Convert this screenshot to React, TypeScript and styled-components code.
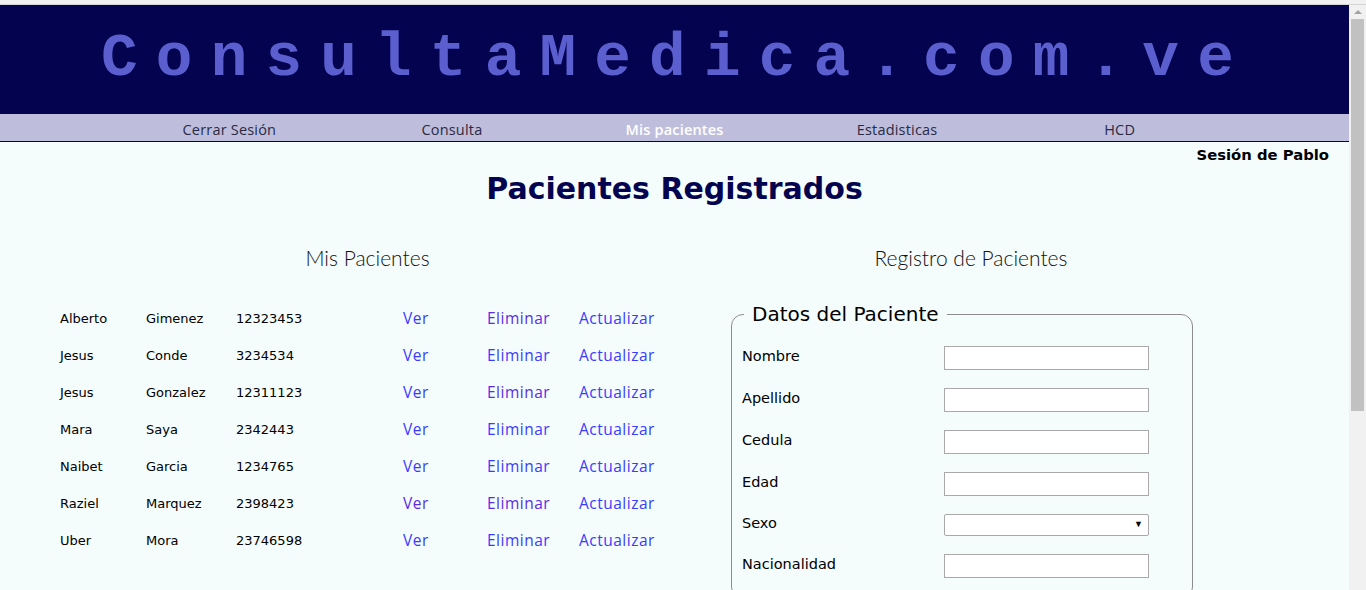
import React from "react";
import styled, { createGlobalStyle } from "styled-components";

const GlobalStyle = createGlobalStyle`
  html, body {
    margin: 0;
    padding: 0;
    overflow: hidden;
    background: #f1f1f1;
  }
`;

interface Patient {
  name: string;
  surname: string;
  cedula: string;
  seen?: "ver" | "eliminar" | "both";
}

const patients: Patient[] = [
  { name: "Alberto", surname: "Gimenez", cedula: "12323453", seen: "eliminar" },
  { name: "Jesus", surname: "Conde", cedula: "3234534" },
  { name: "Jesus", surname: "Gonzalez", cedula: "12311123", seen: "eliminar" },
  { name: "Mara", surname: "Saya", cedula: "2342443" },
  { name: "Naibet", surname: "Garcia", cedula: "1234765" },
  { name: "Raziel", surname: "Marquez", cedula: "2398423", seen: "both" },
  { name: "Uber", surname: "Mora", cedula: "23746598" },
];

const navItems = ["Cerrar Sesión", "Consulta", "Mis pacientes", "Estadisticas", "HCD"];

const fields = ["Nombre", "Apellido", "Cedula", "Edad", "Sexo", "Nacionalidad"];

export default function App() {
  return (
    <Frame>
      <GlobalStyle />
      <TopStrip />
      <Window>
        <Page>
          <Header>ConsultaMedica.com.ve</Header>
          <Nav>
            {navItems.map((item) => (
              <NavItem key={item} $active={item === "Mis pacientes"}>
                {item}
              </NavItem>
            ))}
          </Nav>
          <Content>
            <Session>Sesión de Pablo</Session>
            <Title>Pacientes Registrados</Title>
            <Columns>
              <Column>
                <SectionTitle>Mis Pacientes</SectionTitle>
                <PatientList>
                  {patients.map((p, i) => (
                    <PatientRow key={i}>
                      <Cell>{p.name}</Cell>
                      <Cell>{p.surname}</Cell>
                      <Cell>{p.cedula}</Cell>
                      <ActionLink $visited={p.seen === "ver" || p.seen === "both"}>Ver</ActionLink>
                      <ActionLink $visited={p.seen === "eliminar" || p.seen === "both"}>Eliminar</ActionLink>
                      <ActionLink>Actualizar</ActionLink>
                    </PatientRow>
                  ))}
                </PatientList>
              </Column>
              <Column>
                <SectionTitle>Registro de Pacientes</SectionTitle>
                <Fieldset>
                  <Legend>Datos del Paciente</Legend>
                  {fields.map((f) => (
                    <FormRow key={f}>
                      <Label>{f}</Label>
                      {f === "Sexo" ? (
                        <SelectBox>
                          <Select defaultValue="">
                            <option value=""></option>
                            <option value="M">Masculino</option>
                            <option value="F">Femenino</option>
                          </Select>
                        </SelectBox>
                      ) : (
                        <Input type="text" />
                      )}
                    </FormRow>
                  ))}
                </Fieldset>
              </Column>
            </Columns>
          </Content>
        </Page>
        <Scrollbar>
          <ScrollArrow />
          <ScrollThumb />
        </Scrollbar>
      </Window>
    </Frame>
  );
}

const Frame = styled.div`
  display: flex;
  flex-direction: column;
  height: 590px;
  width: 1366px;
`;

const TopStrip = styled.div`
  height: 4px;
  background: #f1f1f1;
  border-bottom: 1px solid #d4d4d4;
  flex-shrink: 0;
`;

const Window = styled.div`
  flex: 1;
  display: flex;
  min-height: 0;
`;

const Page = styled.div`
  flex: 1;
  display: flex;
  flex-direction: column;
  background: #f5fcfc;
  overflow: hidden;
`;

const Header = styled.div`
  height: 109px;
  background: #03034f;
  color: #5a5ecf;
  font-family: "Liberation Mono", "Courier New", monospace;
  font-weight: bold;
  font-size: 61px;
  letter-spacing: 18.2px;
  display: flex;
  align-items: center;
  justify-content: center;
  padding-left: 4px;
  padding-bottom: 2px;
  box-sizing: border-box;
  flex-shrink: 0;
`;

const Nav = styled.div`
  height: 27px;
  background: #bebedc;
  border-bottom: 1px solid #03034f;
  display: flex;
  justify-content: center;
  flex-shrink: 0;
`;

const NavItem = styled.div<{ $active?: boolean }>`
  width: 16.5%;
  text-align: center;
  line-height: 31px;
  font-family: "Open Sans", "Noto Sans", sans-serif;
  font-size: 14.5px;
  letter-spacing: 0.2px;
  color: ${(p) => (p.$active ? "#ffffff" : "#2a2a44")};
  font-weight: ${(p) => (p.$active ? 600 : 400)};
`;

const Content = styled.div`
  display: flex;
  flex-direction: column;
`;

const Session = styled.div`
  align-self: flex-end;
  padding: 4px 20px 0 0;
  font-family: "DejaVu Sans", Verdana, sans-serif;
  font-weight: bold;
  font-size: 14.8px;
  color: #000;
`;

const Title = styled.h1`
  margin: 8px 0 0;
  text-align: center;
  font-family: "DejaVu Sans", Verdana, sans-serif;
  font-weight: bold;
  font-size: 30px;
  color: #03034f;
`;

const Columns = styled.div`
  display: grid;
  grid-template-columns: 655px 552px;
  padding-left: 40px;
  margin-top: 39px;
`;

const Column = styled.div`
  display: flex;
  flex-direction: column;
`;

const SectionTitle = styled.h2`
  margin: 0;
  text-align: center;
  font-family: "Lato", "Open Sans", sans-serif;
  font-weight: 300;
  font-size: 21px;
  color: #111;
`;

const PatientList = styled.div`
  display: flex;
  flex-direction: column;
  padding: 30px 0 0 20px;
`;

const PatientRow = styled.div`
  display: grid;
  grid-template-columns: 86px 90px 167px 84px 92px auto;
  height: 37px;
  align-items: center;
`;

const Cell = styled.span`
  font-family: "DejaVu Sans", Verdana, sans-serif;
  font-size: 13px;
  color: #000;
`;

const ActionLink = styled.a<{ $visited?: boolean }>`
  font-family: "Open Sans", "Noto Sans", sans-serif;
  font-size: 15.5px;
  letter-spacing: 0.5px;
  margin-top: -2px;
  color: ${(p) => (p.$visited ? "#5a2de6" : "#3b3bff")};
  cursor: pointer;
`;

const Fieldset = styled.fieldset`
  margin: 32px 0 0 36px;
  width: 462px;
  box-sizing: border-box;
  border: 1.5px solid #8c8c8c;
  border-radius: 12px;
  padding: 20px 10px 20px;
  display: flex;
  flex-direction: column;
  gap: 18px;
`;

const Legend = styled.legend`
  margin-left: 2px;
  padding: 0 8px;
  font-family: "DejaVu Sans", Verdana, sans-serif;
  font-size: 20px;
  color: #000;
`;

const FormRow = styled.div`
  display: grid;
  grid-template-columns: 202px 205px;
  align-items: center;
`;

const Label = styled.span`
  font-family: "DejaVu Sans", Verdana, sans-serif;
  font-size: 14.5px;
  color: #000;
  margin-top: -5px;
`;

const Input = styled.input`
  width: 205px;
  height: 24px;
  box-sizing: border-box;
  border: 1px solid #a9a9a9;
  background: #fff;
  margin: 0;
  padding: 0 4px;
`;

const SelectBox = styled.div`
  position: relative;
  width: 205px;
  height: 22px;

  &::after {
    content: "▼";
    position: absolute;
    right: 6px;
    top: 5px;
    font-size: 9px;
    color: #000;
    pointer-events: none;
  }
`;

const Select = styled.select`
  appearance: none;
  width: 100%;
  height: 100%;
  box-sizing: border-box;
  border: 1px solid #a9a9a9;
  border-radius: 2px;
  background: #fff;
  margin: 0;
`;

const Scrollbar = styled.div`
  width: 17px;
  background: #f1f1f1;
  display: flex;
  flex-direction: column;
  align-items: center;
  flex-shrink: 0;
`;

const ScrollArrow = styled.div`
  margin-top: 5px;
  width: 0;
  height: 0;
  border-left: 4px solid transparent;
  border-right: 4px solid transparent;
  border-bottom: 4px solid #a3a3a3;
`;

const ScrollThumb = styled.div`
  margin-top: 5px;
  width: 13px;
  height: 392px;
  background: #c1c1c1;
`;
